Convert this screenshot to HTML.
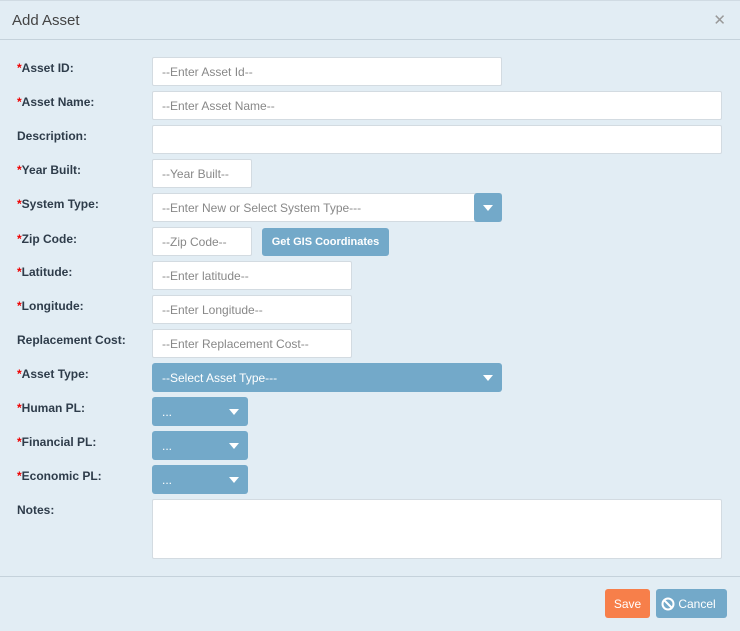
<!DOCTYPE html><html><head><style>
body{margin:0;width:740px;height:631px;background:#e2edf4;font-family:"Liberation Sans",sans-serif;position:relative;overflow:hidden}
.b{position:absolute;box-sizing:border-box}
.hd{left:0;top:0;width:740px;height:40px;border-bottom:1px solid #c5d2db;border-top:1px solid #d0dbe3}
.t{position:absolute;left:12px;top:11px;font-size:15px;color:#444}
.x{position:absolute;right:14px;top:10px;font-size:15px;color:#999}
.l{position:absolute;left:17px;font-size:12px;font-weight:bold;color:#2e3c4a}
.l i{color:#e00;font-style:normal}
.in{position:absolute;box-sizing:border-box;background:#fff;border:1px solid #d3dbe1;border-radius:2px;font-size:12px;color:#888;padding:0 9px;line-height:29px;white-space:nowrap}
.bl{position:absolute;box-sizing:border-box;background:#73a9c9;border-radius:3px;color:#fff;font-size:12px;padding:0 10px;line-height:31px;white-space:nowrap}
.ar{position:absolute;right:9px;top:12px;width:0;height:0;border-left:5px solid transparent;border-right:5px solid transparent;border-top:6px solid #fff}
.ft{left:0;top:576px;width:740px;height:55px;border-top:1px solid #c5d2db}
</style></head><body>
<div class="b hd"><span class="t">Add Asset</span><span class="x">✕</span></div>
<div class="l" style="top:61px"><i>*</i>Asset ID:</div><div class="in" style="left:152px;top:57px;width:350px;height:29px">--Enter Asset Id--</div>
<div class="l" style="top:95px"><i>*</i>Asset Name:</div><div class="in" style="left:152px;top:91px;width:570px;height:29px">--Enter Asset Name--</div>
<div class="l" style="top:129px">Description:</div><div class="in" style="left:152px;top:125px;width:570px;height:29px"></div>
<div class="l" style="top:163px"><i>*</i>Year Built:</div><div class="in" style="left:152px;top:159px;width:100px;height:29px">--Year Built--</div>
<div class="l" style="top:197px"><i>*</i>System Type:</div><div class="in" style="left:152px;top:193px;width:350px;height:29px">--Enter New or Select System Type---</div><div class="bl" style="left:474px;top:193px;width:28px;height:29px"><span class="ar"></span></div>
<div class="l" style="top:232px"><i>*</i>Zip Code:</div><div class="in" style="left:152px;top:227px;width:100px;height:29px">--Zip Code--</div><div class="bl" style="left:262px;top:228px;width:127px;height:28px;font-weight:bold;text-align:center;line-height:29px;padding:0;font-size:11px">Get GIS Coordinates</div>
<div class="l" style="top:265px"><i>*</i>Latitude:</div><div class="in" style="left:152px;top:261px;width:200px;height:29px">--Enter latitude--</div>
<div class="l" style="top:299px"><i>*</i>Longitude:</div><div class="in" style="left:152px;top:295px;width:200px;height:29px">--Enter Longitude--</div>
<div class="l" style="top:333px">Replacement Cost:</div><div class="in" style="left:152px;top:329px;width:200px;height:29px">--Enter Replacement Cost--</div>
<div class="l" style="top:367px"><i>*</i>Asset Type:</div><div class="bl" style="left:152px;top:363px;width:350px;height:29px">--Select Asset Type---<span class="ar"></span></div>
<div class="l" style="top:401px"><i>*</i>Human PL:</div><div class="bl" style="left:152px;top:397px;width:96px;height:29px">...<span class="ar"></span></div>
<div class="l" style="top:435px"><i>*</i>Financial PL:</div><div class="bl" style="left:152px;top:431px;width:96px;height:29px">...<span class="ar"></span></div>
<div class="l" style="top:469px"><i>*</i>Economic PL:</div><div class="bl" style="left:152px;top:465px;width:96px;height:29px">...<span class="ar"></span></div>
<div class="l" style="top:503px">Notes:</div><div class="in" style="left:152px;top:499px;width:570px;height:60px"></div>
<div class="b ft"></div>
<div class="bl" style="left:605px;top:589px;width:45px;height:29px;background:#f77f4a;text-align:center;padding:0">Save</div>
<div class="bl" style="left:656px;top:589px;width:71px;height:29px;padding:0 0 0 5px"><svg width="14" height="14" viewBox="0 0 14 14" style="vertical-align:-3px"><circle cx="7" cy="7" r="5.5" fill="none" stroke="#fff" stroke-width="2"/><path d="M3 3L11 11" stroke="#fff" stroke-width="2"/></svg> Cancel</div>
</body></html>
